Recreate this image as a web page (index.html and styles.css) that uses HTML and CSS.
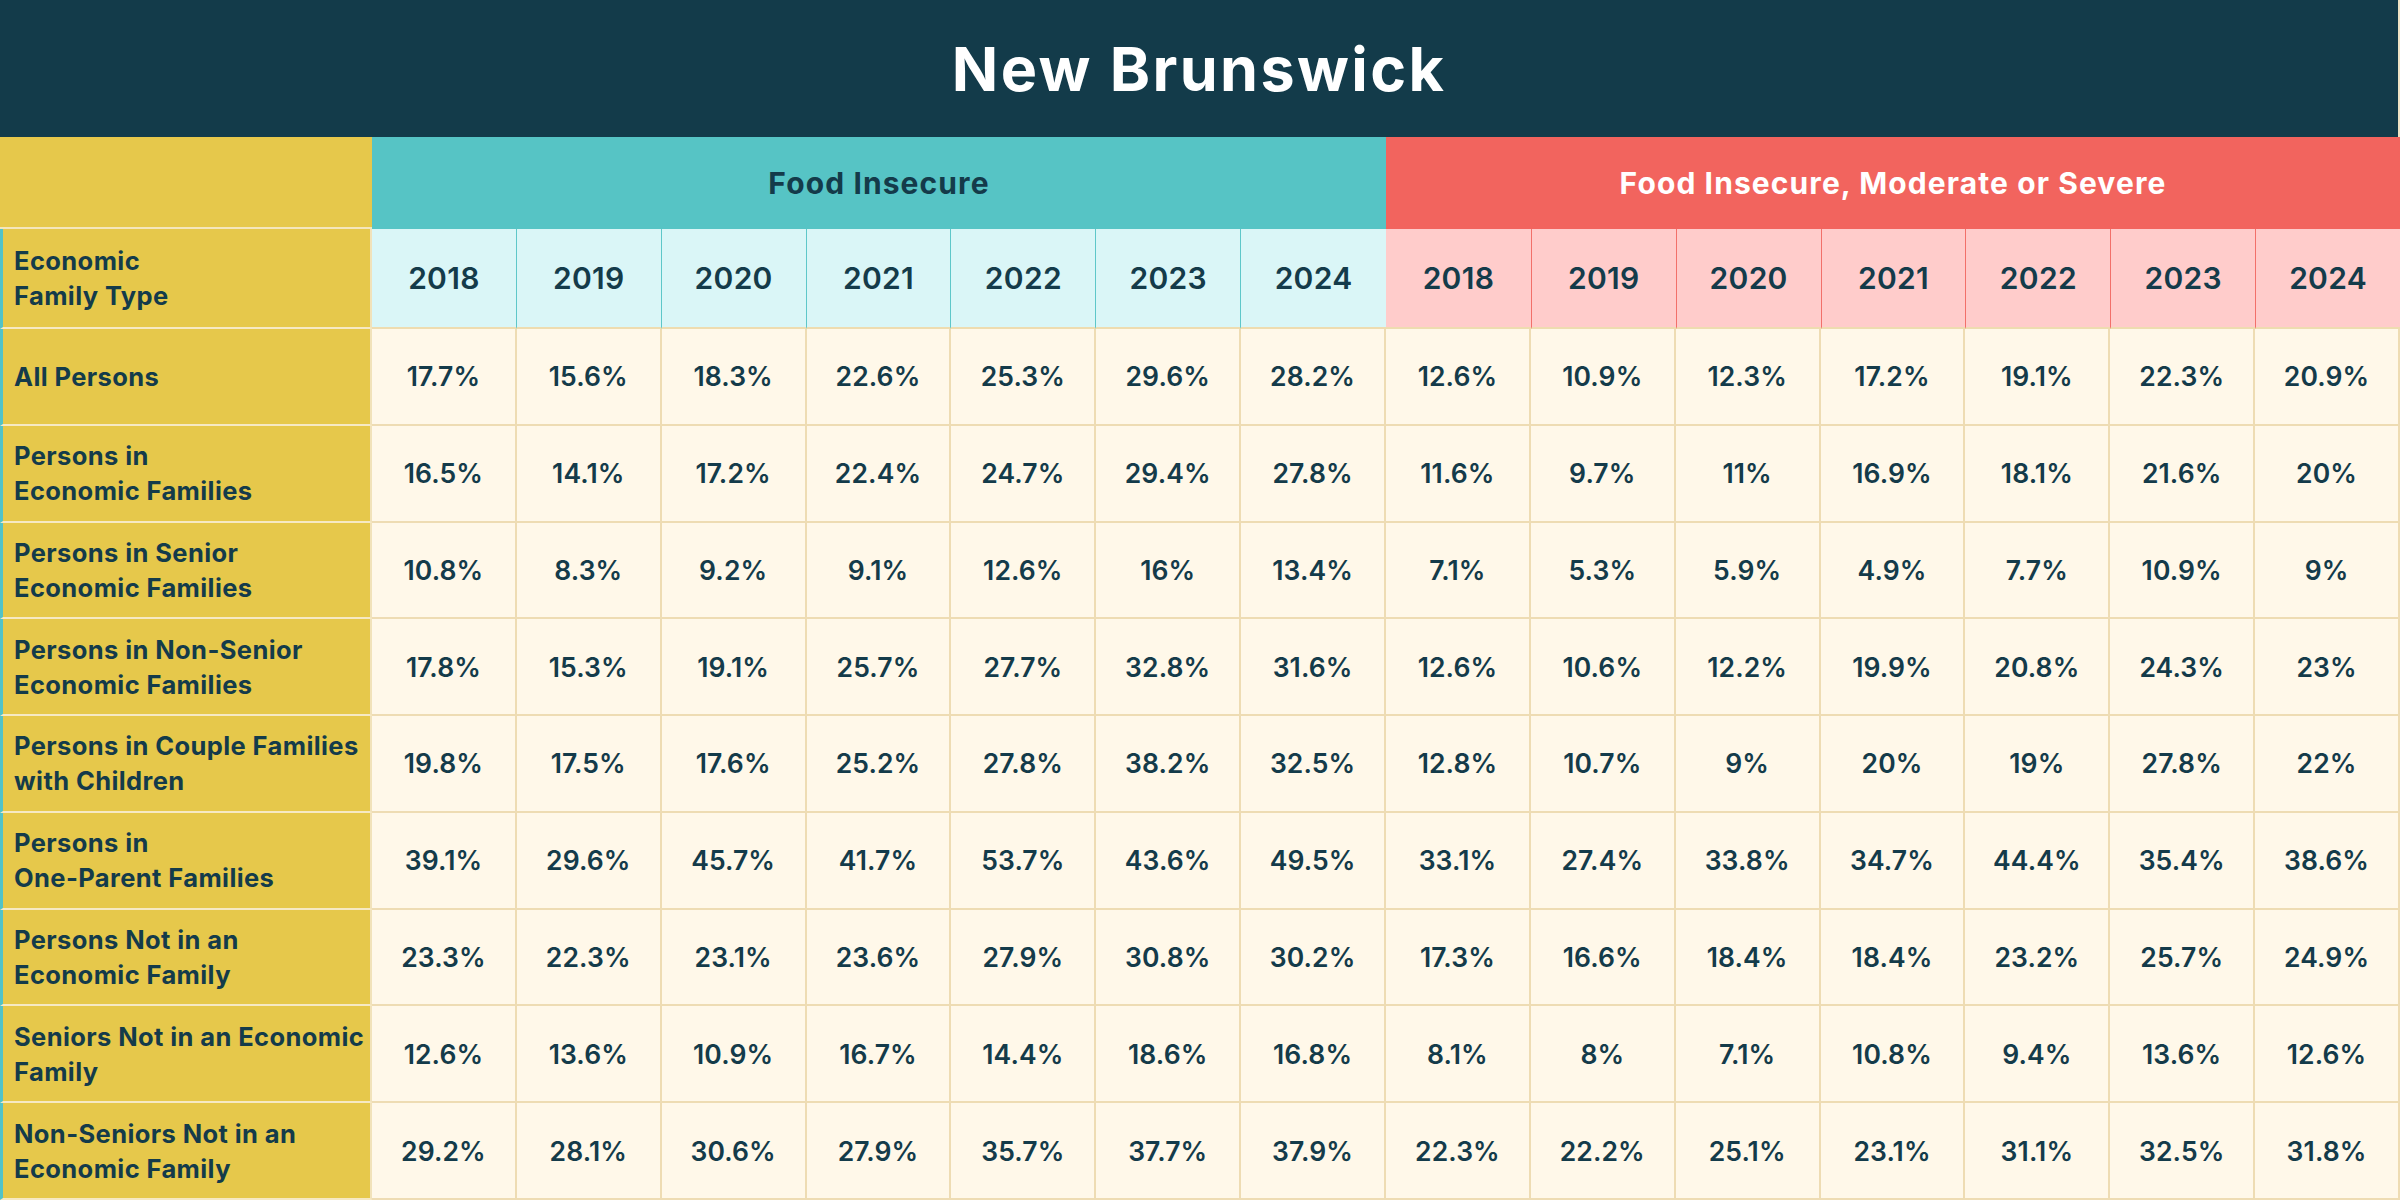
FILE: index.html
```html
<!DOCTYPE html>
<html lang="en">
<head>
<meta charset="utf-8">
<title>New Brunswick – Food Insecurity by Economic Family Type</title>
<link rel="stylesheet" href="styles.css">
</head>
<body>
<div class="table">
  <div class="title">New Brunswick</div>

  <div class="corner"></div>
  <div class="group group-fi">Food Insecure</div>
  <div class="group group-ms">Food Insecure, Moderate or Severe</div>

  <div class="label label-head">Economic<br>Family Type</div>
  <div class="year y-fi">2018</div><div class="year y-fi">2019</div><div class="year y-fi">2020</div><div class="year y-fi">2021</div><div class="year y-fi">2022</div><div class="year y-fi">2023</div><div class="year y-fi last">2024</div>
  <div class="year y-ms first">2018</div><div class="year y-ms">2019</div><div class="year y-ms">2020</div><div class="year y-ms">2021</div><div class="year y-ms">2022</div><div class="year y-ms">2023</div><div class="year y-ms">2024</div>

  <div class="label">All Persons</div>
  <div class="cell">17.7%</div><div class="cell">15.6%</div><div class="cell">18.3%</div><div class="cell">22.6%</div><div class="cell">25.3%</div><div class="cell">29.6%</div><div class="cell">28.2%</div>
  <div class="cell">12.6%</div><div class="cell">10.9%</div><div class="cell">12.3%</div><div class="cell">17.2%</div><div class="cell">19.1%</div><div class="cell">22.3%</div><div class="cell">20.9%</div>

  <div class="label">Persons in<br>Economic Families</div>
  <div class="cell">16.5%</div><div class="cell">14.1%</div><div class="cell">17.2%</div><div class="cell">22.4%</div><div class="cell">24.7%</div><div class="cell">29.4%</div><div class="cell">27.8%</div>
  <div class="cell">11.6%</div><div class="cell">9.7%</div><div class="cell">11%</div><div class="cell">16.9%</div><div class="cell">18.1%</div><div class="cell">21.6%</div><div class="cell">20%</div>

  <div class="label">Persons in Senior<br>Economic Families</div>
  <div class="cell">10.8%</div><div class="cell">8.3%</div><div class="cell">9.2%</div><div class="cell">9.1%</div><div class="cell">12.6%</div><div class="cell">16%</div><div class="cell">13.4%</div>
  <div class="cell">7.1%</div><div class="cell">5.3%</div><div class="cell">5.9%</div><div class="cell">4.9%</div><div class="cell">7.7%</div><div class="cell">10.9%</div><div class="cell">9%</div>

  <div class="label">Persons in Non-Senior<br>Economic Families</div>
  <div class="cell">17.8%</div><div class="cell">15.3%</div><div class="cell">19.1%</div><div class="cell">25.7%</div><div class="cell">27.7%</div><div class="cell">32.8%</div><div class="cell">31.6%</div>
  <div class="cell">12.6%</div><div class="cell">10.6%</div><div class="cell">12.2%</div><div class="cell">19.9%</div><div class="cell">20.8%</div><div class="cell">24.3%</div><div class="cell">23%</div>

  <div class="label">Persons in Couple Families<br>with Children</div>
  <div class="cell">19.8%</div><div class="cell">17.5%</div><div class="cell">17.6%</div><div class="cell">25.2%</div><div class="cell">27.8%</div><div class="cell">38.2%</div><div class="cell">32.5%</div>
  <div class="cell">12.8%</div><div class="cell">10.7%</div><div class="cell">9%</div><div class="cell">20%</div><div class="cell">19%</div><div class="cell">27.8%</div><div class="cell">22%</div>

  <div class="label">Persons in<br>One-Parent Families</div>
  <div class="cell">39.1%</div><div class="cell">29.6%</div><div class="cell">45.7%</div><div class="cell">41.7%</div><div class="cell">53.7%</div><div class="cell">43.6%</div><div class="cell">49.5%</div>
  <div class="cell">33.1%</div><div class="cell">27.4%</div><div class="cell">33.8%</div><div class="cell">34.7%</div><div class="cell">44.4%</div><div class="cell">35.4%</div><div class="cell">38.6%</div>

  <div class="label">Persons Not in an<br>Economic Family</div>
  <div class="cell">23.3%</div><div class="cell">22.3%</div><div class="cell">23.1%</div><div class="cell">23.6%</div><div class="cell">27.9%</div><div class="cell">30.8%</div><div class="cell">30.2%</div>
  <div class="cell">17.3%</div><div class="cell">16.6%</div><div class="cell">18.4%</div><div class="cell">18.4%</div><div class="cell">23.2%</div><div class="cell">25.7%</div><div class="cell">24.9%</div>

  <div class="label">Seniors Not in an Economic<br>Family</div>
  <div class="cell">12.6%</div><div class="cell">13.6%</div><div class="cell">10.9%</div><div class="cell">16.7%</div><div class="cell">14.4%</div><div class="cell">18.6%</div><div class="cell">16.8%</div>
  <div class="cell">8.1%</div><div class="cell">8%</div><div class="cell">7.1%</div><div class="cell">10.8%</div><div class="cell">9.4%</div><div class="cell">13.6%</div><div class="cell">12.6%</div>

  <div class="label">Non-Seniors Not in an<br>Economic Family</div>
  <div class="cell">29.2%</div><div class="cell">28.1%</div><div class="cell">30.6%</div><div class="cell">27.9%</div><div class="cell">35.7%</div><div class="cell">37.7%</div><div class="cell">37.9%</div>
  <div class="cell">22.3%</div><div class="cell">22.2%</div><div class="cell">25.1%</div><div class="cell">23.1%</div><div class="cell">31.1%</div><div class="cell">32.5%</div><div class="cell">31.8%</div>
</div>
</body>
</html>
```

FILE: styles.css
```css
* {
  box-sizing: border-box;
}

html, body {
  margin: 0;
  padding: 0;
  background: #fff8e9;
}

body {
  font-family: Inter, "Open Sans", "DejaVu Sans", sans-serif;
  color: #143b4a;
}

.table {
  width: 2400px;
  height: 1200px;
  display: grid;
  grid-template-columns: 372px repeat(14, 1fr);
  grid-template-rows: 137px 92px 100px repeat(9, 1fr);
  overflow: hidden;
}

.title {
  grid-column: 1 / -1;
  background: #133b4a;
  color: #ffffff;
  font-weight: 700;
  font-size: 61px;
  letter-spacing: 2.4px;
  display: flex;
  align-items: center;
  justify-content: center;
  border-right: 2px solid #efe3c4;
}

.corner {
  background: #e6c84b;
  border-bottom: 2px solid #f4e6bb;
}

.group {
  grid-column: span 7;
  display: flex;
  align-items: center;
  justify-content: center;
  font-weight: 700;
  font-size: 30px;
  letter-spacing: 1.1px;
}

.group-fi {
  background: #56c4c5;
  color: #143b4a;
}

.group-ms {
  background: #f2645e;
  color: #ffffff;
}

.label {
  background: #e6c84b;
  border-left: 3px solid #52c3c8;
  border-right: 2px solid #f1e2ba;
  border-bottom: 2px solid #f6e9c4;
  display: flex;
  align-items: center;
  padding: 0 8px 0 11px;
  font-weight: 700;
  font-size: 25.5px;
  line-height: 35px;
  letter-spacing: 0.4px;
  white-space: nowrap;
}

.year {
  display: flex;
  align-items: center;
  justify-content: center;
  font-weight: 600;
  font-size: 30px;
  letter-spacing: 0.3px;
  border-bottom: 2px solid #eedcb0;
}

.y-fi {
  background: #daf6f7;
  border-right: 1px solid #5ec7c9;
}

.y-fi.last {
  border-right: none;
}

.y-ms {
  background: #ffcccb;
  border-left: 1px solid #f2706a;
}

.y-ms.first {
  border-left: none;
}

.cell {
  background: #fff8e9;
  border-right: 2px solid #eedcb3;
  border-bottom: 2px solid #eedcb3;
  display: flex;
  align-items: center;
  justify-content: center;
  font-weight: 600;
  font-size: 26.5px;
  letter-spacing: 0.1px;
}
```
